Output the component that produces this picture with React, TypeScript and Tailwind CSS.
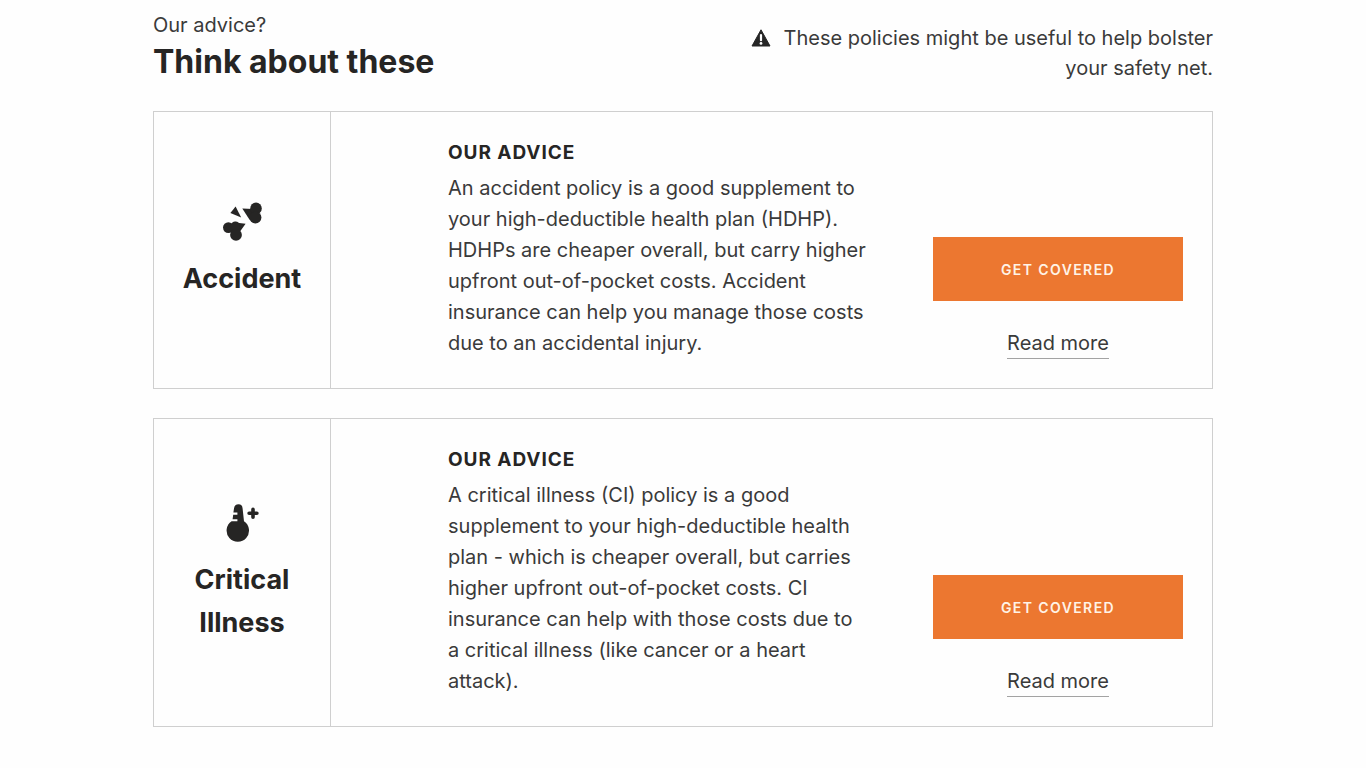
import { ReactNode } from "react";

type Policy = {
  name: string;
  icon: ReactNode;
  advice: string;
};

function WarningIcon() {
  return (
    <svg viewBox="0 0 20 18" className="mt-1.5 h-[18px] w-5 shrink-0" aria-hidden="true">
      <path d="M10 0.8 L19 17 H1 Z" fill="#262626" stroke="#262626" strokeWidth="1" strokeLinejoin="round" />
      <path d="M10 6 V11.2" stroke="#fefefe" strokeWidth="2.2" strokeLinecap="round" />
      <circle cx="10" cy="14.4" r="1.4" fill="#fefefe" />
    </svg>
  );
}

function BoneIcon() {
  return (
    <svg viewBox="0 0 40 40" className="size-10" fill="#262524" aria-hidden="true">
      <path d="M13.6 5.4 L19.2 16.4 L8.4 12 Z" />
      <path d="M20.3 7.4 L31 8 L34 12 L32 20 L27.4 18.6 Z" />
      <circle cx="34" cy="7.4" r="5.8" />
      <circle cx="33.4" cy="16.6" r="6" />
      <path d="M13 20.8 L15 21.8 L23.6 22.7 L18.4 30 L12 33 L7 24 Z" />
      <circle cx="6.4" cy="26.6" r="5.4" />
      <circle cx="13.4" cy="25" r="4.6" />
      <circle cx="14" cy="33.9" r="5.9" />
    </svg>
  );
}

function ThermometerIcon() {
  return (
    <svg viewBox="0 0 40 40" className="size-10" fill="#262524" aria-hidden="true">
      <path d="M12 6.4 Q12.6 2.2 16.6 2.2 Q20.2 2.2 20.6 6.4 L22 19.2 A11.2 11.2 0 1 1 9.6 19.2 H15.4 V17.2 H10.6 L11.2 12.8 H15.4 V10.4 H11.4 Z" />
      <path d="M31 7.4 V15.2 M27.1 11.3 H34.9" stroke="#262524" strokeWidth="3.6" strokeLinecap="round" />
    </svg>
  );
}

const policies: Policy[] = [
  {
    name: "Accident",
    icon: <BoneIcon />,
    advice:
      "An accident policy is a good supplement to your high-deductible health plan (HDHP). HDHPs are cheaper overall, but carry higher upfront out-of-pocket costs. Accident insurance can help you manage those costs due to an accidental injury.",
  },
  {
    name: "Critical Illness",
    icon: <ThermometerIcon />,
    advice:
      "A critical illness (CI) policy is a good supplement to your high-deductible health plan - which is cheaper overall, but carries higher upfront out-of-pocket costs. CI insurance can help with those costs due to a critical illness (like cancer or a heart attack).",
  },
];

function PolicyCard({ name, icon, advice }: Policy) {
  return (
    <article className="flex border border-[#cfcfcf]">
      <div className="flex w-[177px] shrink-0 flex-col items-center justify-center gap-4 border-r border-[#cfcfcf] px-6 text-center">
        {icon}
        <h2 className="text-[27px] leading-[43px] font-bold">{name}</h2>
      </div>
      <div className="flex flex-1 justify-between gap-12 py-[29px] pr-[29px] pl-[117px]">
        <div className="max-w-[419px]">
          <h3 className="mb-2 text-[19px] leading-6 font-bold tracking-wider uppercase">Our advice</h3>
          <p className="text-[20px] leading-[31px] text-[#3a3a3a]">{advice}</p>
        </div>
        <div className="flex w-[250px] shrink-0 flex-col items-center justify-end gap-7">
          <button
            type="button"
            className="h-16 w-full bg-[#ec7730] text-[14px] font-semibold tracking-widest text-[#fff3e6] uppercase"
          >
            Get covered
          </button>
          <a href="#" className="border-b border-[#a3a3a3] text-[20px] leading-[29px] text-[#3a3a3a]">
            Read more
          </a>
        </div>
      </div>
    </article>
  );
}

export default function App() {
  return (
    <main className="min-h-screen bg-[#fefefe] font-['Inter',sans-serif] text-[#262524]">
      <div className="mx-auto max-w-[1060px] pt-2.5 pb-10">
        <header className="flex items-end justify-between">
          <div>
            <p className="text-[20px] leading-[30px] text-[#3a3a3a]">Our advice?</p>
            <h1 className="text-[32px] leading-[43px] font-bold">Think about these</h1>
          </div>
          <div className="flex max-w-[480px] gap-3 text-right text-[20px] leading-[30px] text-[#3a3a3a]">
            <WarningIcon />
            <p>
              These policies might be useful to help bolster
              <br />
              your safety net.
            </p>
          </div>
        </header>
        <section className="mt-7 flex flex-col gap-[29px]">
          {policies.map((policy) => (
            <PolicyCard key={policy.name} {...policy} />
          ))}
        </section>
      </div>
    </main>
  );
}
